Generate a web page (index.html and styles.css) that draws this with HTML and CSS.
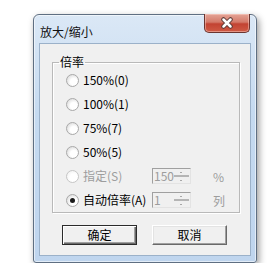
FILE: index.html
```html
<!DOCTYPE html>
<html lang="zh-CN">

<head>
    <meta charset="UTF-8">
    <title>放大/缩小</title>
    <link rel="stylesheet" href="styles.css">
</head>

<body>
    <!-- 对话框 -->
    <div class="window">
        <div class="titlebar">
            <span class="title">放大/缩小</span>
            <button class="close-btn" type="button">
                <svg width="14" height="12" viewBox="0 0 14 12">
                    <path d="M3.5 2.5 L10.5 9.5 M10.5 2.5 L3.5 9.5" stroke="#5a3a36" stroke-width="4.5" stroke-linecap="round" fill="none"/>
                    <path d="M3.5 2.5 L10.5 9.5 M10.5 2.5 L3.5 9.5" stroke="#ffffff" stroke-width="2.5" stroke-linecap="round" fill="none"/>
                </svg>
            </button>
        </div>

        <div class="client">
            <fieldset class="group">
                <legend>倍率</legend>
                <div class="row"><span class="radio"></span><span class="label">150%(0)</span></div>
                <div class="row"><span class="radio"></span><span class="label">100%(1)</span></div>
                <div class="row"><span class="radio"></span><span class="label">75%(7)</span></div>
                <div class="row"><span class="radio"></span><span class="label">50%(5)</span></div>
                <div class="row disabled">
                    <span class="radio"></span>
                    <span class="label">指定(S)</span>
                    <span class="spin"><span class="spin-val">150</span><span class="spin-arrows"><i class="up"></i><i class="down"></i></span></span>
                    <span class="unit">%</span>
                </div>
                <div class="row">
                    <span class="radio checked"></span>
                    <span class="label">自动倍率(A)</span>
                    <span class="spin"><span class="spin-val">1</span><span class="spin-arrows"><i class="up"></i><i class="down"></i></span></span>
                    <span class="unit">列</span>
                </div>
            </fieldset>

            <div class="buttons">
                <button class="btn default" type="button">确定</button>
                <button class="btn" type="button">取消</button>
            </div>
        </div>
    </div>
</body>

</html>
```

FILE: styles.css
```css
* {
    margin: 0;
    padding: 0;
    box-sizing: border-box;
    font-family: 'Noto Sans CJK SC', 'Liberation Sans', sans-serif;
}

body {
    background: #ffffff;
    padding: 14px 0 0 33px;
}

/* 窗口外框 */
.window {
    width: 224px;
    height: 249px;
    border: 1px solid #5f6f82;
    border-radius: 6px 6px 3px 3px;
    background: linear-gradient(#dbe8f6, #c5daf0 40%, #bfd5ee);
    box-shadow: 2px 3px 7px rgba(0, 0, 0, 0.4), inset 0 0 0 1px rgba(255, 255, 255, 0.55);
}

.titlebar {
    height: 28px;
    display: flex;
    align-items: flex-start;
}

.title {
    padding-left: 6px;
    margin-top: 9px;
    font-size: 12px;
    line-height: 16px;
    color: #111;
}

.close-btn {
    margin-left: auto;
    margin-right: 6px;
    margin-top: -1px;
    width: 46px;
    height: 19px;
    border: 1px solid #6b3530;
    border-top: none;
    border-radius: 0 0 5px 5px;
    background: linear-gradient(#e4a496, #d47a6a 45%, #c24332 55%, #cf5a45);
    box-shadow: inset 0 0 0 1px rgba(255, 220, 210, 0.45);
    display: flex;
    align-items: center;
    justify-content: center;
}

.close-btn svg {
    display: block;
}

/* 客户区 */
.client {
    margin-left: 5px;
    width: 212px;
    height: 213px;
    background: #f0f0f0;
    border: 1px solid #9bb1c9;
}

.group {
    margin: 12px 0 0 12px;
    width: 188px;
    border: 1px solid #b9b9b9;
    box-shadow: inset 1px 1px 0 #ffffff, 1px 1px 0 #ffffff;
    padding: 0 0 0 6px;
}

.group legend {
    font-size: 12px;
    line-height: 12px;
    padding: 0 1px;
    color: #000;
}

.row {
    height: 24px;
    display: grid;
    grid-template-columns: 17px 69px 39px 1fr;
    align-items: center;
    padding-left: 7px;
    font-size: 12px;
    color: #000;
}

.radio {
    width: 13px;
    height: 13px;
    border-radius: 50%;
    border: 1px solid #a9a9a9;
    background: radial-gradient(circle at 62% 62%, #ffffff 35%, #e8e8e8 65%, #d2d2d2);
    position: relative;
}

.radio.checked::after {
    content: '';
    position: absolute;
    left: 3px;
    top: 3px;
    width: 5px;
    height: 5px;
    border-radius: 50%;
    background: #1b1b1b;
}

.label {
    line-height: 16px;
    white-space: nowrap;
}

.disabled {
    color: #9d9d9d;
}

.disabled .radio {
    border-color: #c6c6c6;
    background: radial-gradient(circle at 62% 62%, #ffffff 40%, #ececec);
}

/* 数值框 */
.spin {
    height: 16px;
    display: flex;
    border: 1px solid;
    border-color: #a0a0a0 #e3e3e3 #e3e3e3 #a0a0a0;
    background: #f0f0f0;
    color: #9d9d9d;
}

.spin-val {
    flex: 1;
    padding-left: 1px;
    line-height: 14px;
}

.spin-arrows {
    width: 15px;
    display: flex;
    flex-direction: column;
    margin: 0 1px 0 0;
}

.spin-arrows i {
    flex: 1;
    border-bottom: 1px solid #b5b5b5;
    position: relative;
}

.spin-arrows i::after {
    content: '';
    position: absolute;
    left: 6px;
    top: 3px;
    width: 2px;
    height: 1px;
    background: #a8a8a8;
}

.spin-arrows i.down {
    border-bottom: none;
    border-top: 1px solid #b5b5b5;
}

.unit {
    padding-left: 22px;
    color: #9d9d9d;
}

/* 按钮 */
.buttons {
    display: flex;
    gap: 15px;
    margin-top: 12px;
    padding-left: 22px;
}

.btn {
    width: 75px;
    height: 20px;
    font-size: 12px;
    line-height: 16px;
    color: #000;
    background: #f0f0f0;
    border: 1px solid;
    border-color: #ffffff #696969 #696969 #ffffff;
    box-shadow: inset -1px -1px 0 #a0a0a0, inset 1px 1px 0 #e3e3e3;
}

.btn.default {
    border: 1px solid #2b2b2b;
    box-shadow: inset 1px 1px 0 #ffffff, inset -1px -1px 0 #696969, inset -2px -2px 0 #a0a0a0;
}
```
